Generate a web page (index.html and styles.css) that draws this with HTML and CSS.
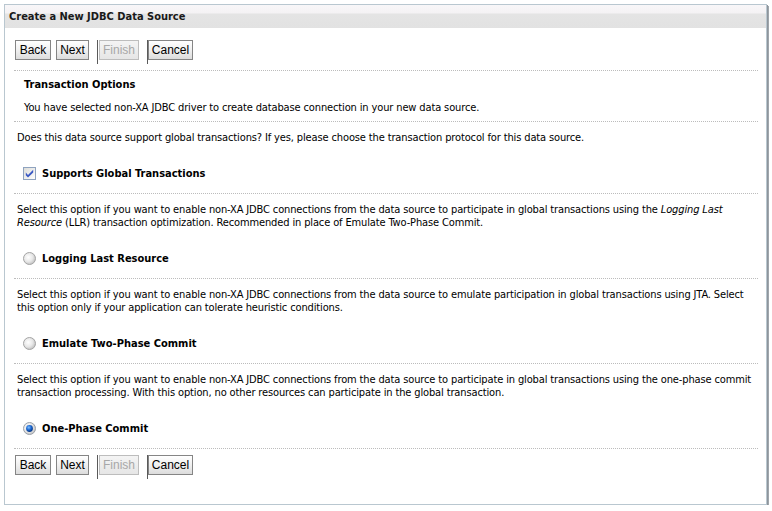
FILE: index.html
```html
<!DOCTYPE html>
<html>
<head>
<meta charset="utf-8">
<title>Create a New JDBC Data Source</title>
<link rel="stylesheet" href="styles.css">
</head>
<body>
<div class="panel">
  <div class="header">Create a New JDBC Data Source</div>
  <div class="content">
    <div class="btnrow">
      <button class="btn btn-back">Back</button>
      <button class="btn btn-next">Next</button>
      <span class="sep sep-a"></span>
      <button class="btn btn-finish" disabled>Finish</button>
      <span class="sep sep-b"></span>
      <button class="btn btn-cancel">Cancel</button>
    </div>
    <div class="rule"></div>
    <div class="intro">
      <h2 class="intro-title">Transaction Options</h2>
      <p class="intro-text">You have selected non-XA JDBC driver to create database connection in your new data source.</p>
    </div>
    <div class="rule"></div>
    <p class="question">Does this data source support global transactions? If yes, please choose the transaction protocol for this data source.</p>
    <div class="option">
      <svg class="ctl" width="13" height="13" viewBox="0 0 13 13">
        <defs>
          <linearGradient id="cbg" x1="0" y1="0" x2="1" y2="1">
            <stop offset="0" stop-color="#dcdcd8"/>
            <stop offset="1" stop-color="#ffffff"/>
          </linearGradient>
        </defs>
        <rect x="0.5" y="0.5" width="12" height="12" fill="url(#cbg)" stroke="#8fa3bf"/>
        <path d="M2.8 5.6 L5 7.9 L10.2 2.8 L10.2 5.4 L5 10.6 L2.8 8.3 Z" fill="#3a58c4"/>
      </svg>
      <span class="label">Supports Global Transactions</span>
    </div>
    <div class="rule"></div>
    <p class="desc">Select this option if you want to enable non-XA JDBC connections from the data source to participate in global transactions using the <i>Logging Last Resource</i> (LLR) transaction optimization. Recommended in place of Emulate Two-Phase Commit.</p>
    <div class="option">
      <svg class="ctl" width="13" height="13" viewBox="0 0 13 13">
        <defs>
          <radialGradient id="rg" cx="0.4" cy="0.4" r="0.6">
            <stop offset="0" stop-color="#ffffff"/>
            <stop offset="0.6" stop-color="#e8e8e8"/>
            <stop offset="1" stop-color="#c4c4c4"/>
          </radialGradient>
        </defs>
        <circle cx="6.5" cy="6.5" r="6" fill="url(#rg)" stroke="#a4a4a4"/>
      </svg>
      <span class="label">Logging Last Resource</span>
    </div>
    <div class="rule"></div>
    <p class="desc">Select this option if you want to enable non-XA JDBC connections from the data source to emulate participation in global transactions using JTA. Select this option only if your application can tolerate heuristic conditions.</p>
    <div class="option">
      <svg class="ctl" width="13" height="13" viewBox="0 0 13 13">
        <circle cx="6.5" cy="6.5" r="6" fill="url(#rg)" stroke="#a4a4a4"/>
      </svg>
      <span class="label">Emulate Two-Phase Commit</span>
    </div>
    <div class="rule"></div>
    <p class="desc">Select this option if you want to enable non-XA JDBC connections from the data source to participate in global transactions using the one-phase commit transaction processing. With this option, no other resources can participate in the global transaction.</p>
    <div class="option">
      <svg class="ctl" width="13" height="13" viewBox="0 0 13 13">
        <defs>
          <radialGradient id="rb" cx="0.4" cy="0.35" r="0.6">
            <stop offset="0" stop-color="#7fc0ff"/>
            <stop offset="0.6" stop-color="#1a66d0"/>
            <stop offset="1" stop-color="#0a3c8c"/>
          </radialGradient>
        </defs>
        <circle cx="6.5" cy="6.5" r="6" fill="url(#rg)" stroke="#9aa0a8"/>
        <circle cx="6.5" cy="6.5" r="3.4" fill="url(#rb)"/>
      </svg>
      <span class="label">One-Phase Commit</span>
    </div>
    <div class="rule"></div>
    <div class="btnrow bottom">
      <button class="btn btn-back">Back</button>
      <button class="btn btn-next">Next</button>
      <span class="sep sep-a"></span>
      <button class="btn btn-finish" disabled>Finish</button>
      <span class="sep sep-b"></span>
      <button class="btn btn-cancel">Cancel</button>
    </div>
  </div>
</div>
</body>
</html>
```

FILE: styles.css
```css
html, body {
  margin: 0;
  padding: 0;
  background: #ffffff;
}

body {
  font-family: "DejaVu Sans Condensed", "DejaVu Sans", sans-serif;
  font-size: 11px;
  color: #000000;
}

.panel {
  margin: 4px 5px 0 4px;
  border: 1px solid #b9c7d0;
  box-shadow: 1px 1px 0 #8e959c, 2px 2px 0 #9fa6ac;
  background: #ffffff;
  padding-bottom: 25px;
}

.header {
  height: 23px;
  line-height: 23px;
  padding-left: 4px;
  font-weight: bold;
  color: #1a1a1a;
  background: linear-gradient(#f8f6f8 0, #f4f2f4 8px, #e4e4e4 9px, #e2e2e2 23px);
}

.content {
  padding: 0 8px 0 9px;
}

.btnrow {
  display: flex;
  align-items: flex-start;
  padding: 12px 0 0 1px;
  height: 24px;
}

.btnrow.bottom {
  padding-top: 6px;
}

.btn {
  flex: none;
  height: 20px;
  margin: 0;
  padding: 0;
  border: 1px solid #858585;
  background: linear-gradient(#ffffff, #f0f0f0 50%, #dcdcdc);
  font-family: "Liberation Sans", Arial, sans-serif;
  font-size: 12px;
  color: #000000;
  line-height: 18px;
  border-radius: 0;
  text-align: center;
}

.btn-back {
  width: 36px;
  margin-right: 5px;
}

.btn-next {
  width: 33px;
  margin-right: 8px;
}

.btn-finish {
  width: 40px;
  margin-right: 8px;
}

.btn-cancel {
  width: 45px;
}

.btn:disabled {
  color: #a8a8a8;
  border-color: #bdbdbd;
  background: linear-gradient(#f4f4f4, #e6e6e6);
}

.sep {
  flex: none;
  width: 1px;
  height: 24px;
  background: #5a5a5a;
}

.sep-a {
  margin-right: 1px;
}

.rule {
  border-top: 1px dotted #bcbcbc;
  height: 0;
}

.btnrow + .rule {
  margin-top: 6px;
}

.intro {
  padding-left: 10px;
}

.intro-title {
  margin: 7px 0 0;
  font-size: 11px;
  line-height: 13px;
  font-weight: bold;
}

.intro-text,
.question,
.desc {
  line-height: 13px;
  letter-spacing: -0.13px;
}

.intro-text {
  margin: 10px 0 7px;
}

.question {
  margin: 9px 0 0 3px;
}

.desc {
  margin: 9px 0 0 3px;
}

.option {
  display: flex;
  align-items: center;
  height: 13px;
  margin: 23px 0 13px 9px;
}

.ctl {
  flex: none;
  display: block;
  margin-right: 6px;
}

.label {
  font-weight: bold;
  line-height: 13px;
}
```
